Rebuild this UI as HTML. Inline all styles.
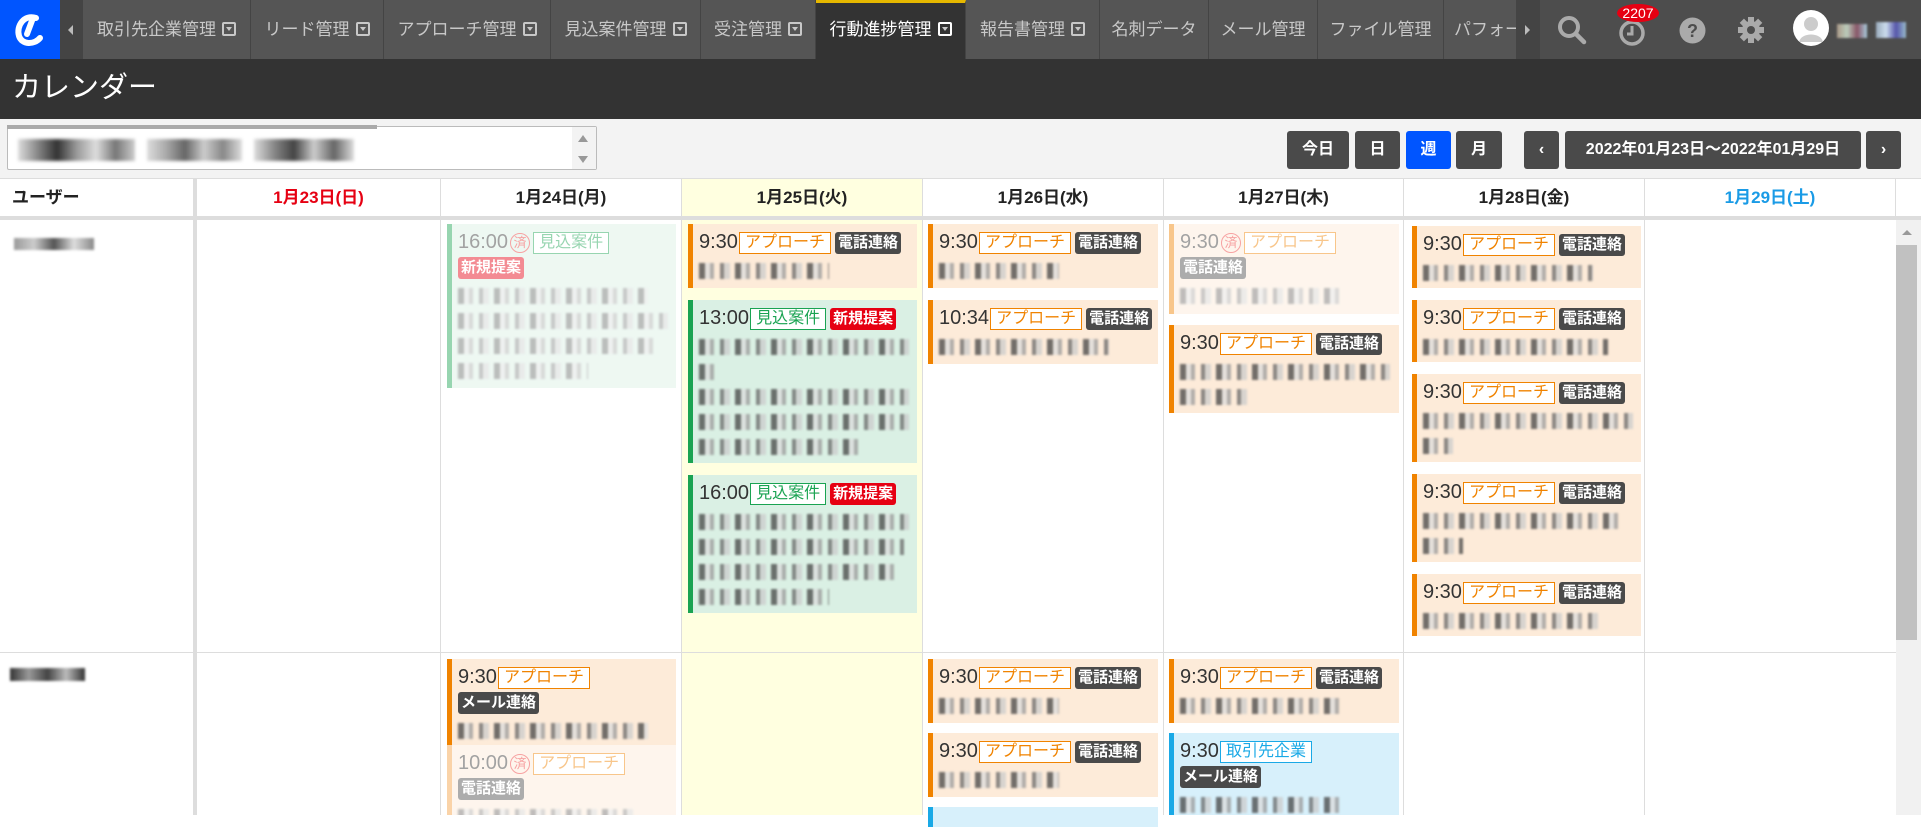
<!DOCTYPE html>
<html><head><meta charset="utf-8">
<style>
*{box-sizing:border-box;margin:0;padding:0}
body{width:1921px;height:815px;overflow:hidden;background:#fff;font-family:"Liberation Sans","Noto Sans CJK JP",sans-serif;position:relative}
.a{position:absolute}
#nav{left:0;top:0;width:1921px;height:59px;background:#4d4d4d}
.tab{position:absolute;top:0;height:59px;background:#555;border-right:1px solid #444;color:#c8c8c8;font-size:17px;line-height:59px;text-align:center;white-space:nowrap;overflow:hidden}
.dd{display:inline-block;width:14px;height:14px;border:2px solid #c8c8c8;border-radius:2px;margin-left:6px;vertical-align:-1px;position:relative}
.dd:after{content:"";position:absolute;left:2px;top:3px;border-left:3px solid transparent;border-right:3px solid transparent;border-top:4px solid #c8c8c8}
#title{left:0;top:59px;width:1921px;height:60px;background:#333;color:#fff;font-size:29px;line-height:58px;padding-left:12px}
#tool{left:0;top:119px;width:1921px;height:60px;background:#f3f3f3}
.btn{position:absolute;top:131px;height:38px;background:#4a4a4a;color:#fff;font-weight:bold;font-size:16px;line-height:38px;text-align:center;border-radius:3px}
.hd{position:absolute;top:179px;height:37px;font-size:17px;font-weight:bold;line-height:37px;text-align:center;color:#222;border-right:1px solid #ddd}
.col{position:absolute;top:220px;height:595px;border-right:1px solid #ddd}
.card{position:absolute;background:#fdebd9;border-left:5px solid #f08300;padding:7px 0 0 6px;overflow:hidden;white-space:nowrap}
.t{font-size:20px;color:#333;font-weight:300;vertical-align:middle}
.tg{display:inline-block;font-size:16px;line-height:20px;border:1px solid #f08300;color:#f08300;background:#fff;padding:0 5px;vertical-align:middle;margin-left:1px}
.bd{display:inline-block;font-size:15px;line-height:22px;background:#4a4a4a;color:#fff;font-weight:bold;padding:0 3px;border-radius:3px;vertical-align:middle;margin-left:4px}
.rd{background:#e60012}
.bl{height:16px;margin:9px 0 0 0;background:repeating-linear-gradient(90deg,#444 0 6px,#ddd 6px 11px,#999 11px 15px,transparent 15px 21px,#666 21px 25px,#ccc 25px 31px,transparent 31px 36px);filter:blur(1px);opacity:.75}
.g{background:#daf0e4;border-left-color:#1aa352}
.gt{border-color:#1aa352;color:#1aa352}
.fade{opacity:.45}
.sumi{display:inline-block;width:20px;height:20px;border:1.5px solid #e33;border-radius:50%;color:#e33;font-size:13px;line-height:17px;text-align:center;vertical-align:middle;margin:0 2px}
</style></head><body>
<div id="nav" class="a"></div>
<div class="a" style="left:0;top:0;width:60px;height:59px;background:#0055ff"></div>
<svg class="a" style="left:10px;top:12px" width="40" height="36" viewBox="0 0 40 36"><path d="M26 6 C14 2 6 14 9 24 C12 33 24 33 30 26" stroke="#fff" stroke-width="6" fill="none" stroke-linecap="round"/><path d="M23 6 L17 22" stroke="#fff" stroke-width="6" stroke-linecap="round"/></svg>
<div class="a" style="left:60px;top:0;width:23px;height:59px;background:#444"></div>
<div class="a" style="left:68px;top:25px;border-right:5px solid #bbb;border-top:5px solid transparent;border-bottom:5px solid transparent"></div>
<div class="tab" style="left:83px;width:168px">取引先企業管理<span class="dd"></span></div>
<div class="tab" style="left:251px;width:133px">リード管理<span class="dd"></span></div>
<div class="tab" style="left:384px;width:167px">アプローチ管理<span class="dd"></span></div>
<div class="tab" style="left:551px;width:150px">見込案件管理<span class="dd"></span></div>
<div class="tab" style="left:701px;width:115px">受注管理<span class="dd"></span></div>
<div class="tab" style="left:816px;width:150px;background:#333;color:#fff;border-top:3px solid #e6b800;line-height:53px">行動進捗管理<span class="dd" style="border-color:#fff"></span></div>
<div class="tab" style="left:966px;width:134px">報告書管理<span class="dd"></span></div>
<div class="tab" style="left:1100px;width:109px">名刺データ</div>
<div class="tab" style="left:1209px;width:109px">メール管理</div>
<div class="tab" style="left:1318px;width:126px">ファイル管理</div>
<div class="tab" style="left:1444px;width:73px;text-align:left;padding-left:10px">パフォー</div>
<div class="a" style="left:1517px;top:0;width:23px;height:59px;background:#444"></div>
<div class="a" style="left:1525px;top:25px;border-left:5px solid #bbb;border-top:5px solid transparent;border-bottom:5px solid transparent"></div>
<svg class="a" style="left:1556px;top:14px" width="32" height="32" viewBox="0 0 32 32"><circle cx="13" cy="13" r="9" stroke="#aaa" stroke-width="4" fill="none"/><path d="M20 20 L28 28" stroke="#aaa" stroke-width="4.5" stroke-linecap="round"/></svg>
<svg class="a" style="left:1617px;top:18px" width="30" height="30" viewBox="0 0 30 30"><circle cx="15" cy="15" r="11" stroke="#aaa" stroke-width="3.5" fill="none"/><path d="M15 8 V16 H10" stroke="#aaa" stroke-width="3" fill="none"/></svg>
<div class="a" style="left:1617px;top:4px;width:42px;height:18px;border-radius:50%;background:#e60012;color:#fff;font-size:14px;line-height:18px;text-align:center">2207</div>
<svg class="a" style="left:1679px;top:17px" width="27" height="27" viewBox="0 0 27 27"><circle cx="13.5" cy="13.5" r="13" fill="#aaa"/><text x="13.5" y="20" text-anchor="middle" font-size="18" font-weight="bold" fill="#4d4d4d" font-family="Liberation Sans">?</text></svg>
<svg class="a" style="left:1737px;top:16px" width="28" height="28" viewBox="0 0 28 28"><g fill="#aaa"><circle cx="14" cy="14" r="9"/><rect x="11" y="1" width="6" height="26"/><rect x="1" y="11" width="26" height="6"/><rect x="11" y="1" width="6" height="26" transform="rotate(45 14 14)"/><rect x="11" y="1" width="6" height="26" transform="rotate(-45 14 14)"/></g><circle cx="14" cy="14" r="4" fill="#4d4d4d"/></svg>
<svg class="a" style="left:1793px;top:10px" width="36" height="36" viewBox="0 0 36 36"><circle cx="18" cy="18" r="18" fill="#fff"/><circle cx="18" cy="14" r="7" fill="#ccc"/><path d="M6 32 C8 22 28 22 30 32 Z" fill="#ccc"/></svg>
<div class="a" style="left:1837px;top:24px;width:30px;height:14px;background:linear-gradient(90deg,#a98,#bcb,#856,#acd);filter:blur(1px)"></div>
<div class="a" style="left:1876px;top:22px;width:30px;height:16px;background:linear-gradient(90deg,#9ab,#cde,#55a,#9bc);filter:blur(1px)"></div>

<div id="title" class="a">カレンダー</div>
<div id="tool" class="a"></div>
<div class="a" style="left:7px;top:126px;width:590px;height:44px;background:#fff;border:1px solid #bbb;border-radius:2px"></div>
<div class="a" style="left:7px;top:125px;width:370px;height:4px;background:#aaa"></div>
<div class="a" style="left:572px;top:127px;width:24px;height:42px;background:#f3f3f3"></div>
<div class="a" style="left:578px;top:135px;border-bottom:7px solid #999;border-left:5px solid transparent;border-right:5px solid transparent"></div>
<div class="a" style="left:578px;top:156px;border-top:7px solid #999;border-left:5px solid transparent;border-right:5px solid transparent"></div>
<div class="a" style="left:18px;top:139px;width:117px;height:22px;background:linear-gradient(90deg,#ddd,#888,#333,#999,#ddd,#777,#ccc);filter:blur(1.5px)"></div>
<div class="a" style="left:147px;top:139px;width:95px;height:22px;background:linear-gradient(90deg,#ddd,#aaa,#666,#ccc,#888,#ddd);filter:blur(1.5px)"></div>
<div class="a" style="left:254px;top:139px;width:100px;height:22px;background:linear-gradient(90deg,#ddd,#888,#444,#ccc,#666,#ddd);filter:blur(1.5px)"></div>
<div class="btn" style="left:1287px;width:62px">今日</div>
<div class="btn" style="left:1355px;width:45px">日</div>
<div class="btn" style="left:1406px;width:45px;background:#0055ff">週</div>
<div class="btn" style="left:1456px;width:46px">月</div>
<div class="btn" style="left:1524px;width:35px">‹</div>
<div class="btn" style="left:1565px;width:296px">2022年01月23日～2022年01月29日</div>
<div class="btn" style="left:1866px;width:35px">›</div>

<div class="a" style="left:0;top:178px;width:1921px;height:1px;background:#ddd"></div>
<div class="hd" style="left:0;width:197px;text-align:left;padding-left:12px;border-right:4px solid #ddd">ユーザー</div>
<div class="hd" style="left:197px;width:244px;color:#e60012">1月23日(日)</div>
<div class="hd" style="left:441px;width:241px">1月24日(月)</div>
<div class="hd" style="left:682px;width:241px;background:#ffffe0">1月25日(火)</div>
<div class="hd" style="left:923px;width:241px">1月26日(水)</div>
<div class="hd" style="left:1164px;width:240px">1月27日(木)</div>
<div class="hd" style="left:1404px;width:241px">1月28日(金)</div>
<div class="hd" style="left:1645px;width:251px;color:#1a9be6">1月29日(土)</div>
<div class="a" style="left:0;top:216px;width:1921px;height:4px;background:#ddd"></div>

<div class="col" style="left:0;width:197px;border-right:4px solid #ddd"></div>
<div class="col" style="left:197px;width:244px"></div>
<div class="col" style="left:441px;width:241px"></div>
<div class="col" style="left:682px;width:241px;background:#ffffe0"></div>
<div class="col" style="left:923px;width:241px"></div>
<div class="col" style="left:1164px;width:240px"></div>
<div class="col" style="left:1404px;width:241px"></div>
<div class="a" style="left:0;top:652px;width:1896px;height:1px;background:#ddd"></div>
<div class="a" style="left:1896px;top:220px;width:25px;height:595px;background:#f1f1f1"></div>
<div class="a" style="left:1896px;top:245px;width:21px;height:395px;background:#c1c1c1"></div>
<div class="a" style="left:1902px;top:230px;border-bottom:5px solid #999;border-left:5px solid transparent;border-right:5px solid transparent"></div>

<div class="a" style="left:14px;top:238px;width:80px;height:12px;background:linear-gradient(90deg,#999,#ccc,#555,#ddd,#888);filter:blur(1.3px)"></div>
<div class="a" style="left:10px;top:668px;width:75px;height:13px;background:linear-gradient(90deg,#333,#999,#444,#bbb,#333);filter:blur(1.3px)"></div>

<div class="card g fade" style="left:447px;top:224px;width:229px;height:164px"><span class="t">16:00</span><span class="sumi">済</span><span class="tg gt">見込案件</span><br><span class="bd rd" style="margin:3px 0 0">新規提案</span><div class="bl" style="width:190px"></div><div class="bl" style="width:210px"></div><div class="bl" style="width:200px"></div><div class="bl" style="width:130px"></div></div>
<div class="card" style="left:688px;top:224px;width:229px;height:64px"><span class="t">9:30</span><span class="tg">アプローチ</span><span class="bd">電話連絡</span><div class="bl" style="width:130px"></div></div>
<div class="card g" style="left:688px;top:300px;width:229px;height:163px"><span class="t">13:00</span><span class="tg gt">見込案件</span><span class="bd rd">新規提案</span><div class="bl" style="width:210px"></div><div class="bl" style="width:20px"></div><div class="bl" style="width:210px"></div><div class="bl" style="width:210px"></div><div class="bl" style="width:160px"></div></div>
<div class="card g" style="left:688px;top:475px;width:229px;height:138px"><span class="t">16:00</span><span class="tg gt">見込案件</span><span class="bd rd">新規提案</span><div class="bl" style="width:210px"></div><div class="bl" style="width:205px"></div><div class="bl" style="width:200px"></div><div class="bl" style="width:130px"></div></div>
<div class="card" style="left:928px;top:224px;width:230px;height:64px"><span class="t">9:30</span><span class="tg">アプローチ</span><span class="bd">電話連絡</span><div class="bl" style="width:120px"></div></div>
<div class="card" style="left:928px;top:300px;width:230px;height:64px"><span class="t">10:34</span><span class="tg">アプローチ</span><span class="bd">電話連絡</span><div class="bl" style="width:170px"></div></div>
<div class="card fade" style="left:1169px;top:224px;width:230px;height:90px"><span class="t">9:30</span><span class="sumi">済</span><span class="tg">アプローチ</span><br><span class="bd" style="margin:3px 0 0">電話連絡</span><div class="bl" style="width:160px"></div></div>
<div class="card" style="left:1169px;top:325px;width:230px;height:88px"><span class="t">9:30</span><span class="tg">アプローチ</span><span class="bd">電話連絡</span><div class="bl" style="width:210px"></div><div class="bl" style="width:70px"></div></div>
<div class="card" style="left:1412px;top:226px;width:229px;height:62px"><span class="t">9:30</span><span class="tg">アプローチ</span><span class="bd">電話連絡</span><div class="bl" style="width:170px"></div></div>
<div class="card" style="left:1412px;top:300px;width:229px;height:62px"><span class="t">9:30</span><span class="tg">アプローチ</span><span class="bd">電話連絡</span><div class="bl" style="width:185px"></div></div>
<div class="card" style="left:1412px;top:374px;width:229px;height:88px"><span class="t">9:30</span><span class="tg">アプローチ</span><span class="bd">電話連絡</span><div class="bl" style="width:210px"></div><div class="bl" style="width:30px"></div></div>
<div class="card" style="left:1412px;top:474px;width:229px;height:88px"><span class="t">9:30</span><span class="tg">アプローチ</span><span class="bd">電話連絡</span><div class="bl" style="width:200px"></div><div class="bl" style="width:40px"></div></div>
<div class="card" style="left:1412px;top:574px;width:229px;height:62px"><span class="t">9:30</span><span class="tg">アプローチ</span><span class="bd">電話連絡</span><div class="bl" style="width:180px"></div></div>
<div class="card" style="left:447px;top:659px;width:229px;height:86px"><span class="t">9:30</span><span class="tg">アプローチ</span><br><span class="bd" style="margin:3px 0 0">メール連絡</span><div class="bl" style="width:190px"></div></div>
<div class="card fade" style="left:447px;top:745px;width:229px;height:70px;border-left-color:#f5a040"><span class="t">10:00</span><span class="sumi">済</span><span class="tg">アプローチ</span><br><span class="bd" style="margin:3px 0 0">電話連絡</span><div class="bl" style="width:180px"></div></div>
<div class="card" style="left:928px;top:659px;width:230px;height:64px"><span class="t">9:30</span><span class="tg">アプローチ</span><span class="bd">電話連絡</span><div class="bl" style="width:120px"></div></div>
<div class="card" style="left:928px;top:733px;width:230px;height:64px"><span class="t">9:30</span><span class="tg">アプローチ</span><span class="bd">電話連絡</span><div class="bl" style="width:120px"></div></div>
<div class="card" style="left:928px;top:807px;width:230px;height:20px;background:#d7f0fb;border-left-color:#1aa9e6"></div>
<div class="card" style="left:1169px;top:659px;width:230px;height:64px"><span class="t">9:30</span><span class="tg">アプローチ</span><span class="bd">電話連絡</span><div class="bl" style="width:160px"></div></div>
<div class="card" style="left:1169px;top:733px;width:230px;height:82px;background:#d7f0fb;border-left-color:#1aa9e6"><span class="t">9:30</span><span class="tg" style="border-color:#1aa9e6;color:#1aa9e6">取引先企業</span><br><span class="bd" style="margin:3px 0 0">メール連絡</span><div class="bl" style="width:160px"></div></div>
</body></html>
